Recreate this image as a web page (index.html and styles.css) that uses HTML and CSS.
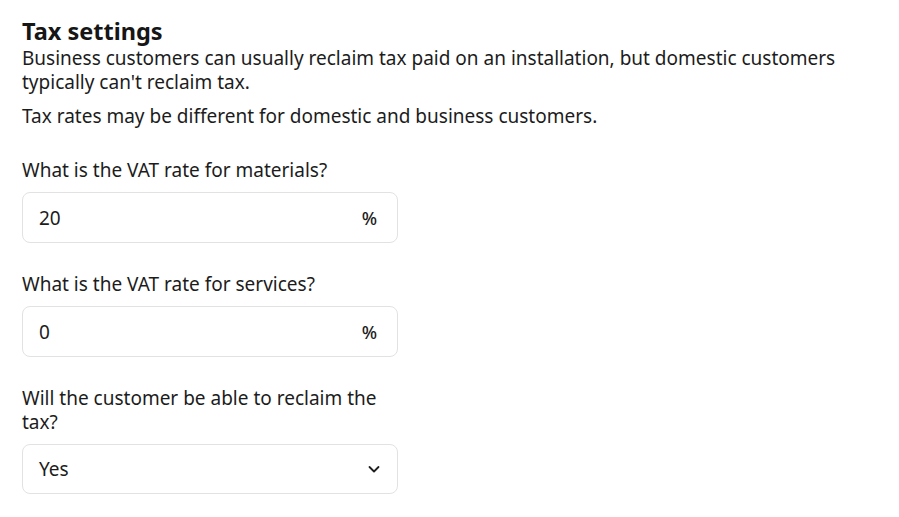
FILE: index.html
```html
<!DOCTYPE html>
<html lang="en">
<head>
<meta charset="utf-8">
<title>Tax settings</title>
<link rel="stylesheet" href="styles.css">
</head>
<body>
<main class="page">
  <h1 class="title">Tax settings</h1>
  <p class="intro">Business customers can usually reclaim tax paid on an installation, but domestic customers typically can't reclaim tax.</p>
  <p class="intro">Tax rates may be different for domestic and business customers.</p>

  <div class="form">
    <div class="field">
      <label class="label">What is the VAT rate for materials?</label>
      <div class="input">
        <span class="value">20</span>
        <span class="suffix">%</span>
      </div>
    </div>
    <div class="field">
      <label class="label">What is the VAT rate for services?</label>
      <div class="input">
        <span class="value">0</span>
        <span class="suffix">%</span>
      </div>
    </div>
    <div class="field">
      <label class="label">Will the customer be able to reclaim the tax?</label>
      <div class="input select">
        <span class="value">Yes</span>
        <svg class="chevron" width="14" height="14" viewBox="0 0 14 14" aria-hidden="true"><path d="M2.5 5 L7 9.5 L11.5 5" fill="none" stroke="#1f1f1f" stroke-width="1.8" stroke-linecap="round" stroke-linejoin="round"/></svg>
      </div>
    </div>
  </div>
</main>
</body>
</html>
```
FILE: styles.css
```css
* { box-sizing: border-box; }
html, body { margin: 0; padding: 0; background: #ffffff; }
body {
  font-family: "Noto Sans", "Open Sans", sans-serif;
  color: #1c1c1c;
  font-size: 19px;
  line-height: 24px;
}
.page {
  padding: 17px 22px 0 22px;
  width: 870px;
}
.title {
  margin: 0 0 1px 0;
  font-size: 23.5px;
  line-height: 28px;
  font-weight: 700;
  color: #161616;
}
.intro {
  margin: 0 0 10px 0;
}
.form {
  width: 376px;
  display: flex;
  flex-direction: column;
  gap: 29px;
  margin-top: 30px;
}
.field {
  display: flex;
  flex-direction: column;
  gap: 10px;
}
.label { display: block; }
.input {
  height: 51px;
  border: 1px solid #e2e2e2;
  border-radius: 8px;
  display: flex;
  align-items: center;
  justify-content: space-between;
  padding: 0 20px 0 16px;
}
.select {
  height: 50px;
  padding-right: 16px;
}
.suffix { font-weight: 500; font-size: 18px; }
.chevron { display: block; }
```
